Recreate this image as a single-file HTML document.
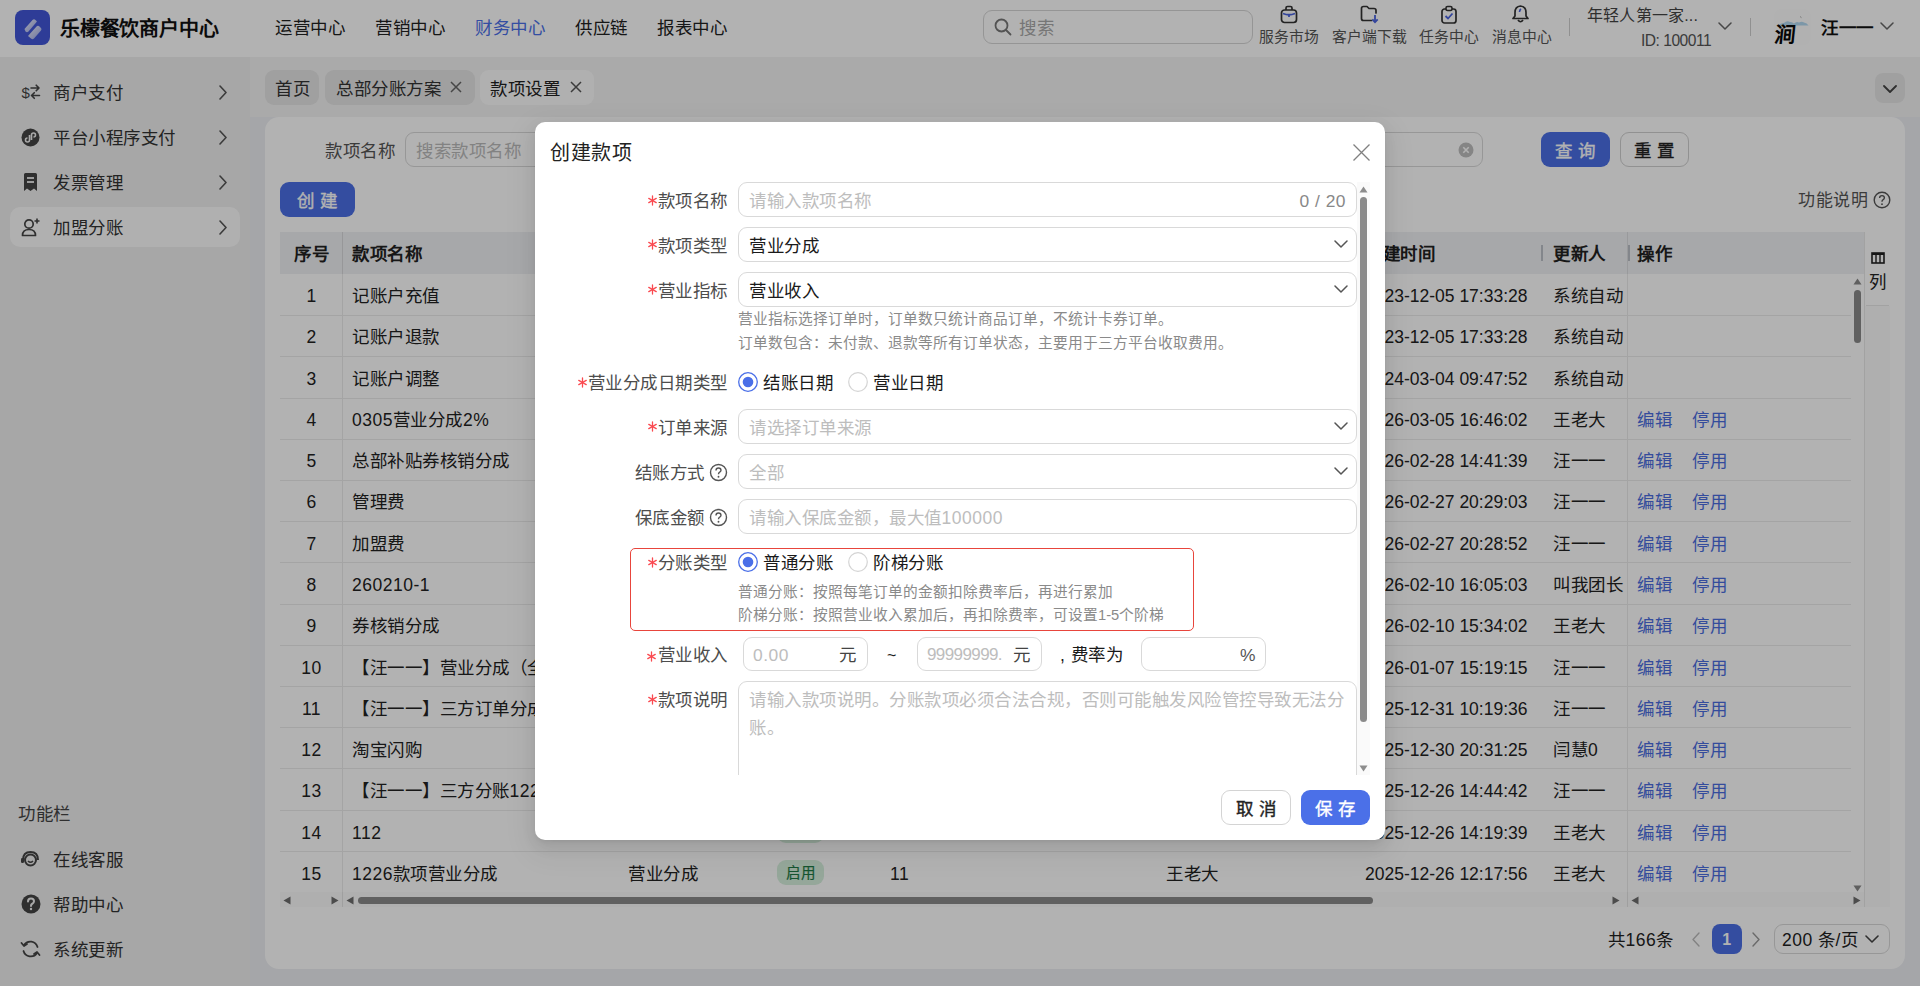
<!DOCTYPE html>
<html lang="zh-CN"><head><meta charset="utf-8">
<style>
*{box-sizing:border-box;margin:0;padding:0}
html,body{width:1920px;height:986px;overflow:hidden;background:#eceef2;font-family:"Liberation Sans",sans-serif;color:#222}
.a{position:absolute}
.t{position:absolute;white-space:nowrap;letter-spacing:0.5px}
</style></head><body>

<div class="a" style="left:0px;top:0px;width:1920px;height:57px;background:#fff"></div>
<div class="a" style="left:15px;top:10px;width:35px;height:35px;border-radius:8px;background:#4257d8"></div>
<svg class="a" style="left:15px;top:10px;" width="35" height="35" viewBox="0 0 35 35"><defs><linearGradient id="lg1" x1="0" y1="0" x2="1" y2="1"><stop offset="0" stop-color="#fff" stop-opacity="0.95"/><stop offset="1" stop-color="#fff" stop-opacity="0.45"/></linearGradient></defs><path d="M9.5 19 L17.5 10 Q19 8.5 20.5 10 L22 11.5 L13.5 21.5 Q12 23 10.5 21.5 Z" fill="url(#lg1)"/><path d="M13 26 L21.5 16.5 Q23 15 24.5 16.5 L26 18 Q27 19.2 26 20.5 L19 28.5 Q17.5 30 16 28.5 Z" fill="url(#lg1)"/></svg>
<div class="t" style="left:60px;top:16.5px;font-size:20px;line-height:24px;height:24px;color:#111;font-weight:bold;letter-spacing:-0.2px">乐檬餐饮商户中心</div>
<div class="t" style="left:275px;top:15.5px;font-size:17.5px;line-height:24px;height:24px;color:#222;font-weight:normal;">运营中心</div>
<div class="t" style="left:375px;top:15.5px;font-size:17.5px;line-height:24px;height:24px;color:#222;font-weight:normal;">营销中心</div>
<div class="t" style="left:475px;top:15.5px;font-size:17.5px;line-height:24px;height:24px;color:#4b70e8;font-weight:normal;">财务中心</div>
<div class="t" style="left:575px;top:15.5px;font-size:17.5px;line-height:24px;height:24px;color:#222;font-weight:normal;">供应链</div>
<div class="t" style="left:657px;top:15.5px;font-size:17.5px;line-height:24px;height:24px;color:#222;font-weight:normal;">报表中心</div>
<div class="a" style="left:983px;top:10px;width:270px;height:34px;border:1px solid #d6d6d6;border-radius:9px;background:#fff"></div>
<svg class="a" style="left:994px;top:18px;" width="18" height="18" viewBox="0 0 18 18"><circle cx="7.5" cy="7.5" r="6" fill="none" stroke="#777" stroke-width="1.8"/><line x1="12" y1="12" x2="16.5" y2="16.5" stroke="#777" stroke-width="1.8" stroke-linecap="round"/></svg>
<div class="t" style="left:1019px;top:15.5px;font-size:17.5px;line-height:24px;height:24px;color:#aaa;font-weight:normal;">搜索</div>
<svg class="a" style="left:1280px;top:5px;" width="18" height="19" viewBox="0 0 18 19"><rect x="1.5" y="5" width="15" height="12.5" rx="3" fill="none" stroke="#333" stroke-width="1.7"/><path d="M6 5 V3 Q6 1.5 7.5 1.5 H10.5 Q12 1.5 12 3 V5" fill="none" stroke="#333" stroke-width="1.7"/><path d="M3 8.5 Q9 11 15 8.5" fill="none" stroke="#4a63e0" stroke-width="1.8"/><line x1="9" y1="10" x2="9" y2="12" stroke="#4a63e0" stroke-width="1.8"/></svg>
<svg class="a" style="left:1360px;top:5px;" width="20" height="19" viewBox="0 0 20 19"><path d="M11.5 15.5 H3.5 Q1.5 15.5 1.5 13.5 V3.5 Q1.5 1.5 3.5 1.5 H7 L9 3.5 H14 Q16 3.5 16 5.5 V8" fill="none" stroke="#333" stroke-width="1.7" stroke-linejoin="round" stroke-linecap="round"/><line x1="15" y1="10" x2="15" y2="17" stroke="#4a63e0" stroke-width="1.8"/><polyline points="12.3,14.3 15,17.2 17.7,14.3" fill="none" stroke="#4a63e0" stroke-width="1.8"/></svg>
<svg class="a" style="left:1440px;top:5px;" width="18" height="19" viewBox="0 0 18 19"><rect x="2" y="4" width="14" height="14" rx="2.5" fill="none" stroke="#333" stroke-width="1.7"/><rect x="6" y="1.5" width="6" height="4" rx="1.5" fill="#fff" stroke="#333" stroke-width="1.6"/><polyline points="5.5,11 8,13.5 12.5,8.5" fill="none" stroke="#4a63e0" stroke-width="1.8"/></svg>
<svg class="a" style="left:1511px;top:4px;" width="19" height="20" viewBox="0 0 19 20"><path d="M9.5 2 Q4 2.5 4 8.5 V12 L2 14.5 H17 L15 12 V8.5 Q15 2.5 9.5 2 Z" fill="none" stroke="#333" stroke-width="1.7" stroke-linejoin="round"/><path d="M7 16 Q9.5 19.5 12 16" fill="none" stroke="#333" stroke-width="1.7"/><path d="M10 5 Q8.5 6 8.5 8" fill="none" stroke="#4a63e0" stroke-width="1.6"/></svg>
<div class="t" style="left:1259px;top:27.0px;font-size:14.8px;line-height:20px;height:20px;color:#555;font-weight:normal;letter-spacing:0">服务市场</div>
<div class="t" style="left:1332px;top:27.0px;font-size:14.8px;line-height:20px;height:20px;color:#555;font-weight:normal;letter-spacing:0">客户端下载</div>
<div class="t" style="left:1419px;top:27.0px;font-size:14.8px;line-height:20px;height:20px;color:#555;font-weight:normal;letter-spacing:0">任务中心</div>
<div class="t" style="left:1492px;top:27.0px;font-size:14.8px;line-height:20px;height:20px;color:#555;font-weight:normal;letter-spacing:0">消息中心</div>
<div class="a" style="left:1569px;top:18px;width:1px;height:18px;background:#cfcfcf"></div>
<div class="t" style="left:1587px;top:6.0px;font-size:16px;line-height:20px;height:20px;color:#444;font-weight:normal;letter-spacing:0.2px">年轻人第一家...</div>
<div class="t" style="left:1641px;top:30.5px;font-size:15.6px;line-height:20px;height:20px;color:#555;font-weight:normal;letter-spacing:-0.5px">ID: 100011</div>
<svg class="a" style="left:1718px;top:22px;" width="14" height="9" viewBox="0 0 14 9"><polyline points="1,1 7.0,7 13,1" fill="none" stroke="#666" stroke-width="1.5" stroke-linecap="round" stroke-linejoin="round"/></svg>
<div class="a" style="left:1750px;top:18px;width:1px;height:18px;background:#cfcfcf"></div>
<div class="a" style="left:1774px;top:9px;width:37px;height:36px;border-radius:8px;background:#fefefe"></div>
<svg class="a" style="left:1774px;top:9px;" width="37" height="36" viewBox="0 0 37 36"><path d="M4.5 16.5 Q7 13.5 10 14 Q13 11 16 13 Q18 12.5 20 14.5 Q22.5 12 25 13.5 Q28 12 30 13.5 Q33 14 34.5 16.5 Z" fill="#aed6f0" opacity="0.95"/><path d="M26 7.5 L27.5 8.7" stroke="#777" stroke-width="0.6"/><text x="13.5" y="33.5" font-size="21" font-weight="bold" text-anchor="middle" fill="#0a0a0a" font-family="Liberation Serif" transform="skewX(-6)">涧</text></svg>
<div class="t" style="left:1821px;top:15.0px;font-size:17.5px;line-height:26px;height:26px;color:#111;font-weight:bold;">汪一一</div>
<svg class="a" style="left:1880px;top:22px;" width="14" height="9" viewBox="0 0 14 9"><polyline points="1,1 7.0,7 13,1" fill="none" stroke="#666" stroke-width="1.5" stroke-linecap="round" stroke-linejoin="round"/></svg>
<div class="a" style="left:0px;top:57px;width:250px;height:929px;background:#efefef"></div>
<div class="a" style="left:10px;top:207px;width:230px;height:40px;border-radius:10px;background:#fcfcfc"></div>
<div class="t" style="left:53px;top:81.0px;font-size:17.5px;line-height:24px;height:24px;color:#333;font-weight:normal;">商户支付</div>
<svg class="a" style="left:219px;top:85px;" width="9" height="15" viewBox="0 0 9 15"><polyline points="1,1 7,7.5 1,14" fill="none" stroke="#555" stroke-width="1.6" stroke-linecap="round" stroke-linejoin="round"/></svg>
<div class="t" style="left:53px;top:126.0px;font-size:17.5px;line-height:24px;height:24px;color:#333;font-weight:normal;">平台小程序支付</div>
<svg class="a" style="left:219px;top:130px;" width="9" height="15" viewBox="0 0 9 15"><polyline points="1,1 7,7.5 1,14" fill="none" stroke="#555" stroke-width="1.6" stroke-linecap="round" stroke-linejoin="round"/></svg>
<div class="t" style="left:53px;top:171.0px;font-size:17.5px;line-height:24px;height:24px;color:#333;font-weight:normal;">发票管理</div>
<svg class="a" style="left:219px;top:175px;" width="9" height="15" viewBox="0 0 9 15"><polyline points="1,1 7,7.5 1,14" fill="none" stroke="#555" stroke-width="1.6" stroke-linecap="round" stroke-linejoin="round"/></svg>
<div class="t" style="left:53px;top:216.0px;font-size:17.5px;line-height:24px;height:24px;color:#333;font-weight:normal;">加盟分账</div>
<svg class="a" style="left:219px;top:220px;" width="9" height="15" viewBox="0 0 9 15"><polyline points="1,1 7,7.5 1,14" fill="none" stroke="#555" stroke-width="1.6" stroke-linecap="round" stroke-linejoin="round"/></svg>
<svg class="a" style="left:21px;top:82px;" width="20" height="20" viewBox="0 0 20 20"><text x="0.5" y="15.5" font-size="15" fill="#444" font-family="Liberation Sans">$</text><path d="M10 6 H18 M15.2 3.2 L18 6 L15.2 8.8 M18.5 13.5 H10.5 M13.3 10.7 L10.5 13.5 L13.3 16.3" fill="none" stroke="#444" stroke-width="1.6" stroke-linecap="round" stroke-linejoin="round"/></svg>
<svg class="a" style="left:21px;top:128px;" width="19" height="19" viewBox="0 0 19 19"><circle cx="9.5" cy="9.5" r="9" fill="#444"/><path d="M8.5 7 V12 Q8.5 14 6.5 14 Q4.5 14 4.5 12 Q4.5 10 6.5 10 M10.5 12 V7 Q10.5 5 12.5 5 Q14.5 5 14.5 7 Q14.5 9 12.5 9" fill="none" stroke="#f2f2f2" stroke-width="1.6"/></svg>
<svg class="a" style="left:22px;top:172px;" width="17" height="20" viewBox="0 0 17 20"><path d="M2 2.5 Q2 1 3.5 1 H13.5 Q15 1 15 2.5 V19 L12 16.5 L8.5 19 L5 16.5 L2 19 Z" fill="#444"/><line x1="5" y1="6" x2="12" y2="6" stroke="#f2f2f2" stroke-width="1.8"/><line x1="5" y1="10" x2="12" y2="10" stroke="#f2f2f2" stroke-width="1.8"/></svg>
<svg class="a" style="left:21px;top:217px;" width="20" height="20" viewBox="0 0 20 20"><circle cx="8" cy="7" r="4.2" fill="none" stroke="#444" stroke-width="1.7"/><path d="M1.5 18.5 Q1.5 12.5 8 12.5 Q14.5 12.5 14.5 18.5 Z" fill="none" stroke="#444" stroke-width="1.7" stroke-linejoin="round"/><path d="M16 1.5 V6.5 M13.5 4 H18.5" stroke="#444" stroke-width="1.6"/></svg>
<div class="t" style="left:18px;top:802.0px;font-size:17.5px;line-height:24px;height:24px;color:#444;font-weight:normal;">功能栏</div>
<div class="t" style="left:53px;top:848.0px;font-size:17.5px;line-height:24px;height:24px;color:#333;font-weight:normal;">在线客服</div>
<div class="t" style="left:53px;top:893.0px;font-size:17.5px;line-height:24px;height:24px;color:#333;font-weight:normal;">帮助中心</div>
<div class="t" style="left:53px;top:938.0px;font-size:17.5px;line-height:24px;height:24px;color:#333;font-weight:normal;">系统更新</div>
<svg class="a" style="left:20px;top:849px;" width="21" height="20" viewBox="0 0 21 20"><path d="M3 11 Q3 3 10.5 3 Q18 3 18 11" fill="none" stroke="#444" stroke-width="2"/><circle cx="10.5" cy="11" r="5.5" fill="none" stroke="#444" stroke-width="2"/><rect x="1" y="9" width="3" height="5" rx="1.2" fill="#444"/><path d="M8 12 Q10.5 14.5 13 12" fill="none" stroke="#444" stroke-width="1.6"/></svg>
<svg class="a" style="left:21px;top:894px;" width="20" height="20" viewBox="0 0 20 20"><circle cx="10" cy="10" r="9.5" fill="#444"/><path d="M7 7.5 Q7 4.5 10 4.5 Q13 4.5 13 7.3 Q13 9 11 10 Q10 10.5 10 12" fill="none" stroke="#f2f2f2" stroke-width="2" stroke-linecap="round"/><circle cx="10" cy="15" r="1.2" fill="#f2f2f2"/></svg>
<svg class="a" style="left:20px;top:939px;" width="21" height="20" viewBox="0 0 21 20"><path d="M17.5 8 A7.5 7.5 0 0 0 4 6 M3.5 12 A7.5 7.5 0 0 0 17 14" fill="none" stroke="#444" stroke-width="1.8" stroke-linecap="round"/><path d="M1.5 4 L4 7 L7 5" fill="none" stroke="#444" stroke-width="1.8" stroke-linecap="round" stroke-linejoin="round"/><path d="M19.5 16 L17 13 L14 15" fill="none" stroke="#444" stroke-width="1.8" stroke-linecap="round" stroke-linejoin="round"/></svg>
<div class="a" style="left:250px;top:57px;width:1670px;height:60px;background:#f4f4f4"></div>
<div class="a" style="left:265px;top:70px;width:54px;height:35px;border-radius:9px;background:#e5e5e5"></div>
<div class="t" style="left:275px;top:76.5px;font-size:17.5px;line-height:24px;height:24px;color:#333;font-weight:normal;">首页</div>
<div class="a" style="left:325px;top:70px;width:150px;height:35px;border-radius:9px;background:#e5e5e5"></div>
<div class="t" style="left:336px;top:76.5px;font-size:17.5px;line-height:24px;height:24px;color:#333;font-weight:normal;">总部分账方案</div>
<svg class="a" style="left:450px;top:81px;" width="12" height="12" viewBox="0 0 12 12"><path d="M1 1 L11 11 M11 1 L1 11" stroke="#666" stroke-width="1.5"/></svg>
<div class="a" style="left:480px;top:70px;width:114px;height:35px;border-radius:9px;background:#fdfdfd"></div>
<div class="t" style="left:490px;top:76.5px;font-size:17.5px;line-height:24px;height:24px;color:#222;font-weight:normal;">款项设置</div>
<svg class="a" style="left:570px;top:81px;" width="12" height="12" viewBox="0 0 12 12"><path d="M1 1 L11 11 M11 1 L1 11" stroke="#555" stroke-width="1.5"/></svg>
<div class="a" style="left:1875px;top:73px;width:30px;height:30px;border-radius:8px;background:#e6e6e6"></div>
<svg class="a" style="left:1883px;top:85px;" width="14" height="9" viewBox="0 0 14 9"><polyline points="1,1 7.0,7 13,1" fill="none" stroke="#444" stroke-width="1.8" stroke-linecap="round" stroke-linejoin="round"/></svg>
<div class="a" style="left:265px;top:117px;width:1640px;height:852px;border-radius:14px;background:#fff"></div>
<div class="t" style="right:1525px;top:139.0px;font-size:17.5px;line-height:24px;height:24px;color:#555;font-weight:normal;text-align:right;">款项名称</div>
<div class="a" style="left:405px;top:132px;width:1078px;height:35px;border:1px solid #d9d9d9;border-radius:9px;background:#fff"></div>
<div class="t" style="left:416px;top:139.0px;font-size:17.5px;line-height:24px;height:24px;color:#bbb;font-weight:normal;">搜索款项名称</div>
<svg class="a" style="left:1458px;top:142px;" width="16" height="16" viewBox="0 0 16 16"><circle cx="8" cy="8" r="7.5" fill="#bfbfbf"/><path d="M5.3 5.3 L10.7 10.7 M10.7 5.3 L5.3 10.7" stroke="#fff" stroke-width="1.6"/></svg>
<div class="a" style="left:1541px;top:132px;width:69px;height:35px;border-radius:9px;background:#4b6fe6"></div>
<div class="t" style="left:1541.0px;width:69px;top:139.0px;font-size:17.5px;line-height:24px;height:24px;color:#fff;font-weight:400;text-align:center;-webkit-text-stroke:0.35px #fff">查 询</div>
<div class="a" style="left:1620px;top:132px;width:69px;height:35px;border:1px solid #d0d0d0;border-radius:9px;background:#fff"></div>
<div class="t" style="left:1620.0px;width:69px;top:139.0px;font-size:17.5px;line-height:24px;height:24px;color:#222;font-weight:400;text-align:center;-webkit-text-stroke:0.35px #222">重 置</div>
<div class="a" style="left:280px;top:182px;width:75px;height:35px;border-radius:9px;background:#4b6fe6"></div>
<div class="t" style="left:280.0px;width:75px;top:189.0px;font-size:17.5px;line-height:24px;height:24px;color:#fff;font-weight:400;text-align:center;-webkit-text-stroke:0.35px #fff">创 建</div>
<div class="t" style="right:52px;top:189.0px;font-size:17px;line-height:24px;height:24px;color:#555;font-weight:normal;text-align:right;">功能说明</div>
<svg class="a" style="left:1873px;top:191px;" width="18" height="18" viewBox="0 0 18 18"><circle cx="9" cy="9" r="7.8" fill="none" stroke="#555" stroke-width="1.4"/><path d="M6.6 7 Q6.6 4.6 9 4.6 Q11.4 4.6 11.4 6.8 Q11.4 8.2 9.9 8.9 Q9 9.4 9 10.8" fill="none" stroke="#555" stroke-width="1.4"/><circle cx="9" cy="13.2" r="0.9" fill="#555"/></svg>
<div class="a" style="left:280px;top:232px;width:1584px;height:42px;background:#f0f1f4"></div>
<div class="t" style="left:294px;top:241.5px;font-size:17.5px;line-height:24px;height:24px;color:#222;font-weight:bold;">序号</div>
<div class="t" style="left:352px;top:241.5px;font-size:17.5px;line-height:24px;height:24px;color:#222;font-weight:bold;">款项名称</div>
<div class="t" style="left:628px;top:241.5px;font-size:17.5px;line-height:24px;height:24px;color:#222;font-weight:bold;">款项类型</div>
<div class="t" style="left:777px;top:241.5px;font-size:17.5px;line-height:24px;height:24px;color:#222;font-weight:bold;">状态</div>
<div class="t" style="left:890px;top:241.5px;font-size:17.5px;line-height:24px;height:24px;color:#222;font-weight:bold;">排序</div>
<div class="t" style="left:1166px;top:241.5px;font-size:17.5px;line-height:24px;height:24px;color:#222;font-weight:bold;">创建人</div>
<div class="t" style="left:1365px;top:241.5px;font-size:17.5px;line-height:24px;height:24px;color:#222;font-weight:bold;">创建时间</div>
<div class="t" style="left:1553px;top:241.5px;font-size:17.5px;line-height:24px;height:24px;color:#222;font-weight:bold;">更新人</div>
<div class="t" style="left:1637px;top:241.5px;font-size:17.5px;line-height:24px;height:24px;color:#222;font-weight:bold;">操作</div>
<div class="a" style="left:342px;top:232px;width:1px;height:42px;background:#d8d9dc"></div>
<div class="a" style="left:1541px;top:245px;width:2px;height:16px;background:#bcc0c8"></div>
<div class="a" style="left:1628px;top:245px;width:2px;height:16px;background:#bcc0c8"></div>
<div class="a" style="left:1627px;top:232px;width:1px;height:42px;background:#dcdde0"></div>
<div class="a" style="left:617px;top:245px;width:2px;height:16px;background:#bcc0c8"></div>
<div class="a" style="left:767px;top:245px;width:2px;height:16px;background:#bcc0c8"></div>
<div class="a" style="left:880px;top:245px;width:2px;height:16px;background:#bcc0c8"></div>
<div class="a" style="left:1155px;top:245px;width:2px;height:16px;background:#bcc0c8"></div>
<div class="a" style="left:1355px;top:245px;width:2px;height:16px;background:#bcc0c8"></div>
<div class="a" style="left:280px;top:315px;width:1571px;height:1px;background:#ebebeb"></div>
<div class="a" style="left:342px;top:274px;width:1px;height:41px;background:#ebebeb"></div>
<div class="a" style="left:1627px;top:274px;width:1px;height:41px;background:#ebebeb"></div>
<div class="t" style="left:286.5px;width:50px;top:284.0px;font-size:17.5px;line-height:24px;height:24px;color:#222;font-weight:normal;text-align:center;">1</div>
<div class="t" style="left:352px;top:284.0px;font-size:17.5px;line-height:24px;height:24px;color:#222;font-weight:normal;">记账户充值</div>
<div class="t" style="left:1365px;top:284.0px;font-size:17.5px;line-height:24px;height:24px;color:#222;font-weight:normal;letter-spacing:0">2023-12-05 17:33:28</div>
<div class="t" style="left:1553px;top:284.0px;font-size:17.5px;line-height:24px;height:24px;color:#222;font-weight:normal;">系统自动</div>
<div class="a" style="left:280px;top:356px;width:1571px;height:1px;background:#ebebeb"></div>
<div class="a" style="left:342px;top:315px;width:1px;height:41px;background:#ebebeb"></div>
<div class="a" style="left:1627px;top:315px;width:1px;height:41px;background:#ebebeb"></div>
<div class="t" style="left:286.5px;width:50px;top:325.3px;font-size:17.5px;line-height:24px;height:24px;color:#222;font-weight:normal;text-align:center;">2</div>
<div class="t" style="left:352px;top:325.3px;font-size:17.5px;line-height:24px;height:24px;color:#222;font-weight:normal;">记账户退款</div>
<div class="t" style="left:1365px;top:325.3px;font-size:17.5px;line-height:24px;height:24px;color:#222;font-weight:normal;letter-spacing:0">2023-12-05 17:33:28</div>
<div class="t" style="left:1553px;top:325.3px;font-size:17.5px;line-height:24px;height:24px;color:#222;font-weight:normal;">系统自动</div>
<div class="a" style="left:280px;top:398px;width:1571px;height:1px;background:#ebebeb"></div>
<div class="a" style="left:342px;top:357px;width:1px;height:41px;background:#ebebeb"></div>
<div class="a" style="left:1627px;top:357px;width:1px;height:41px;background:#ebebeb"></div>
<div class="t" style="left:286.5px;width:50px;top:366.6px;font-size:17.5px;line-height:24px;height:24px;color:#222;font-weight:normal;text-align:center;">3</div>
<div class="t" style="left:352px;top:366.6px;font-size:17.5px;line-height:24px;height:24px;color:#222;font-weight:normal;">记账户调整</div>
<div class="t" style="left:1365px;top:366.6px;font-size:17.5px;line-height:24px;height:24px;color:#222;font-weight:normal;letter-spacing:0">2024-03-04 09:47:52</div>
<div class="t" style="left:1553px;top:366.6px;font-size:17.5px;line-height:24px;height:24px;color:#222;font-weight:normal;">系统自动</div>
<div class="a" style="left:280px;top:439px;width:1571px;height:1px;background:#ebebeb"></div>
<div class="a" style="left:342px;top:398px;width:1px;height:41px;background:#ebebeb"></div>
<div class="a" style="left:1627px;top:398px;width:1px;height:41px;background:#ebebeb"></div>
<div class="t" style="left:286.5px;width:50px;top:407.9px;font-size:17.5px;line-height:24px;height:24px;color:#222;font-weight:normal;text-align:center;">4</div>
<div class="t" style="left:352px;top:407.9px;font-size:17.5px;line-height:24px;height:24px;color:#222;font-weight:normal;">0305营业分成2%</div>
<div class="t" style="left:628px;top:407.9px;font-size:17.5px;line-height:24px;height:24px;color:#222;font-weight:normal;">营业分成</div>
<div class="a" style="left:777px;top:405px;width:47px;height:25px;border-radius:9px;background:#d6efdd"></div>
<div class="t" style="left:777.0px;width:47px;top:406.9px;font-size:14.5px;line-height:24px;height:24px;color:#1f7a45;font-weight:normal;text-align:center;-webkit-text-stroke:0.2px #1f7a45">启用</div>
<div class="t" style="left:1166px;top:407.9px;font-size:17.5px;line-height:24px;height:24px;color:#222;font-weight:normal;">王老大</div>
<div class="t" style="left:1365px;top:407.9px;font-size:17.5px;line-height:24px;height:24px;color:#222;font-weight:normal;letter-spacing:0">2026-03-05 16:46:02</div>
<div class="t" style="left:1553px;top:407.9px;font-size:17.5px;line-height:24px;height:24px;color:#222;font-weight:normal;">王老大</div>
<div class="t" style="left:1637px;top:407.9px;font-size:17.5px;line-height:24px;height:24px;color:#4b6ee0;font-weight:normal;">编辑</div>
<div class="t" style="left:1692px;top:407.9px;font-size:17.5px;line-height:24px;height:24px;color:#4b6ee0;font-weight:normal;">停用</div>
<div class="a" style="left:280px;top:480px;width:1571px;height:1px;background:#ebebeb"></div>
<div class="a" style="left:342px;top:439px;width:1px;height:41px;background:#ebebeb"></div>
<div class="a" style="left:1627px;top:439px;width:1px;height:41px;background:#ebebeb"></div>
<div class="t" style="left:286.5px;width:50px;top:449.1px;font-size:17.5px;line-height:24px;height:24px;color:#222;font-weight:normal;text-align:center;">5</div>
<div class="t" style="left:352px;top:449.1px;font-size:17.5px;line-height:24px;height:24px;color:#222;font-weight:normal;">总部补贴券核销分成</div>
<div class="t" style="left:628px;top:449.1px;font-size:17.5px;line-height:24px;height:24px;color:#222;font-weight:normal;">营业分成</div>
<div class="a" style="left:777px;top:447px;width:47px;height:25px;border-radius:9px;background:#d6efdd"></div>
<div class="t" style="left:777.0px;width:47px;top:448.1px;font-size:14.5px;line-height:24px;height:24px;color:#1f7a45;font-weight:normal;text-align:center;-webkit-text-stroke:0.2px #1f7a45">启用</div>
<div class="t" style="left:1166px;top:449.1px;font-size:17.5px;line-height:24px;height:24px;color:#222;font-weight:normal;">汪一一</div>
<div class="t" style="left:1365px;top:449.1px;font-size:17.5px;line-height:24px;height:24px;color:#222;font-weight:normal;letter-spacing:0">2026-02-28 14:41:39</div>
<div class="t" style="left:1553px;top:449.1px;font-size:17.5px;line-height:24px;height:24px;color:#222;font-weight:normal;">汪一一</div>
<div class="t" style="left:1637px;top:449.1px;font-size:17.5px;line-height:24px;height:24px;color:#4b6ee0;font-weight:normal;">编辑</div>
<div class="t" style="left:1692px;top:449.1px;font-size:17.5px;line-height:24px;height:24px;color:#4b6ee0;font-weight:normal;">停用</div>
<div class="a" style="left:280px;top:521px;width:1571px;height:1px;background:#ebebeb"></div>
<div class="a" style="left:342px;top:480px;width:1px;height:41px;background:#ebebeb"></div>
<div class="a" style="left:1627px;top:480px;width:1px;height:41px;background:#ebebeb"></div>
<div class="t" style="left:286.5px;width:50px;top:490.4px;font-size:17.5px;line-height:24px;height:24px;color:#222;font-weight:normal;text-align:center;">6</div>
<div class="t" style="left:352px;top:490.4px;font-size:17.5px;line-height:24px;height:24px;color:#222;font-weight:normal;">管理费</div>
<div class="t" style="left:628px;top:490.4px;font-size:17.5px;line-height:24px;height:24px;color:#222;font-weight:normal;">固定费用</div>
<div class="a" style="left:777px;top:488px;width:47px;height:25px;border-radius:9px;background:#d6efdd"></div>
<div class="t" style="left:777.0px;width:47px;top:489.4px;font-size:14.5px;line-height:24px;height:24px;color:#1f7a45;font-weight:normal;text-align:center;-webkit-text-stroke:0.2px #1f7a45">启用</div>
<div class="t" style="left:1166px;top:490.4px;font-size:17.5px;line-height:24px;height:24px;color:#222;font-weight:normal;">汪一一</div>
<div class="t" style="left:1365px;top:490.4px;font-size:17.5px;line-height:24px;height:24px;color:#222;font-weight:normal;letter-spacing:0">2026-02-27 20:29:03</div>
<div class="t" style="left:1553px;top:490.4px;font-size:17.5px;line-height:24px;height:24px;color:#222;font-weight:normal;">汪一一</div>
<div class="t" style="left:1637px;top:490.4px;font-size:17.5px;line-height:24px;height:24px;color:#4b6ee0;font-weight:normal;">编辑</div>
<div class="t" style="left:1692px;top:490.4px;font-size:17.5px;line-height:24px;height:24px;color:#4b6ee0;font-weight:normal;">停用</div>
<div class="a" style="left:280px;top:562px;width:1571px;height:1px;background:#ebebeb"></div>
<div class="a" style="left:342px;top:522px;width:1px;height:41px;background:#ebebeb"></div>
<div class="a" style="left:1627px;top:522px;width:1px;height:41px;background:#ebebeb"></div>
<div class="t" style="left:286.5px;width:50px;top:531.7px;font-size:17.5px;line-height:24px;height:24px;color:#222;font-weight:normal;text-align:center;">7</div>
<div class="t" style="left:352px;top:531.7px;font-size:17.5px;line-height:24px;height:24px;color:#222;font-weight:normal;">加盟费</div>
<div class="t" style="left:628px;top:531.7px;font-size:17.5px;line-height:24px;height:24px;color:#222;font-weight:normal;">固定费用</div>
<div class="a" style="left:777px;top:529px;width:47px;height:25px;border-radius:9px;background:#d6efdd"></div>
<div class="t" style="left:777.0px;width:47px;top:530.7px;font-size:14.5px;line-height:24px;height:24px;color:#1f7a45;font-weight:normal;text-align:center;-webkit-text-stroke:0.2px #1f7a45">启用</div>
<div class="t" style="left:1166px;top:531.7px;font-size:17.5px;line-height:24px;height:24px;color:#222;font-weight:normal;">汪一一</div>
<div class="t" style="left:1365px;top:531.7px;font-size:17.5px;line-height:24px;height:24px;color:#222;font-weight:normal;letter-spacing:0">2026-02-27 20:28:52</div>
<div class="t" style="left:1553px;top:531.7px;font-size:17.5px;line-height:24px;height:24px;color:#222;font-weight:normal;">汪一一</div>
<div class="t" style="left:1637px;top:531.7px;font-size:17.5px;line-height:24px;height:24px;color:#4b6ee0;font-weight:normal;">编辑</div>
<div class="t" style="left:1692px;top:531.7px;font-size:17.5px;line-height:24px;height:24px;color:#4b6ee0;font-weight:normal;">停用</div>
<div class="a" style="left:280px;top:604px;width:1571px;height:1px;background:#ebebeb"></div>
<div class="a" style="left:342px;top:563px;width:1px;height:41px;background:#ebebeb"></div>
<div class="a" style="left:1627px;top:563px;width:1px;height:41px;background:#ebebeb"></div>
<div class="t" style="left:286.5px;width:50px;top:573.0px;font-size:17.5px;line-height:24px;height:24px;color:#222;font-weight:normal;text-align:center;">8</div>
<div class="t" style="left:352px;top:573.0px;font-size:17.5px;line-height:24px;height:24px;color:#222;font-weight:normal;">260210-1</div>
<div class="t" style="left:628px;top:573.0px;font-size:17.5px;line-height:24px;height:24px;color:#222;font-weight:normal;">营业分成</div>
<div class="a" style="left:777px;top:570px;width:47px;height:25px;border-radius:9px;background:#d6efdd"></div>
<div class="t" style="left:777.0px;width:47px;top:572.0px;font-size:14.5px;line-height:24px;height:24px;color:#1f7a45;font-weight:normal;text-align:center;-webkit-text-stroke:0.2px #1f7a45">启用</div>
<div class="t" style="left:1166px;top:573.0px;font-size:17.5px;line-height:24px;height:24px;color:#222;font-weight:normal;">叫我团长</div>
<div class="t" style="left:1365px;top:573.0px;font-size:17.5px;line-height:24px;height:24px;color:#222;font-weight:normal;letter-spacing:0">2026-02-10 16:05:03</div>
<div class="t" style="left:1553px;top:573.0px;font-size:17.5px;line-height:24px;height:24px;color:#222;font-weight:normal;">叫我团长</div>
<div class="t" style="left:1637px;top:573.0px;font-size:17.5px;line-height:24px;height:24px;color:#4b6ee0;font-weight:normal;">编辑</div>
<div class="t" style="left:1692px;top:573.0px;font-size:17.5px;line-height:24px;height:24px;color:#4b6ee0;font-weight:normal;">停用</div>
<div class="a" style="left:280px;top:645px;width:1571px;height:1px;background:#ebebeb"></div>
<div class="a" style="left:342px;top:604px;width:1px;height:41px;background:#ebebeb"></div>
<div class="a" style="left:1627px;top:604px;width:1px;height:41px;background:#ebebeb"></div>
<div class="t" style="left:286.5px;width:50px;top:614.3px;font-size:17.5px;line-height:24px;height:24px;color:#222;font-weight:normal;text-align:center;">9</div>
<div class="t" style="left:352px;top:614.3px;font-size:17.5px;line-height:24px;height:24px;color:#222;font-weight:normal;">券核销分成</div>
<div class="t" style="left:628px;top:614.3px;font-size:17.5px;line-height:24px;height:24px;color:#222;font-weight:normal;">营业分成</div>
<div class="a" style="left:777px;top:612px;width:47px;height:25px;border-radius:9px;background:#d6efdd"></div>
<div class="t" style="left:777.0px;width:47px;top:613.3px;font-size:14.5px;line-height:24px;height:24px;color:#1f7a45;font-weight:normal;text-align:center;-webkit-text-stroke:0.2px #1f7a45">启用</div>
<div class="t" style="left:1166px;top:614.3px;font-size:17.5px;line-height:24px;height:24px;color:#222;font-weight:normal;">王老大</div>
<div class="t" style="left:1365px;top:614.3px;font-size:17.5px;line-height:24px;height:24px;color:#222;font-weight:normal;letter-spacing:0">2026-02-10 15:34:02</div>
<div class="t" style="left:1553px;top:614.3px;font-size:17.5px;line-height:24px;height:24px;color:#222;font-weight:normal;">王老大</div>
<div class="t" style="left:1637px;top:614.3px;font-size:17.5px;line-height:24px;height:24px;color:#4b6ee0;font-weight:normal;">编辑</div>
<div class="t" style="left:1692px;top:614.3px;font-size:17.5px;line-height:24px;height:24px;color:#4b6ee0;font-weight:normal;">停用</div>
<div class="a" style="left:280px;top:686px;width:1571px;height:1px;background:#ebebeb"></div>
<div class="a" style="left:342px;top:646px;width:1px;height:41px;background:#ebebeb"></div>
<div class="a" style="left:1627px;top:646px;width:1px;height:41px;background:#ebebeb"></div>
<div class="t" style="left:286.5px;width:50px;top:655.6px;font-size:17.5px;line-height:24px;height:24px;color:#222;font-weight:normal;text-align:center;">10</div>
<div class="t" style="left:352px;top:655.6px;font-size:17.5px;line-height:24px;height:24px;color:#222;font-weight:normal;">【汪一一】营业分成（全部）</div>
<div class="t" style="left:628px;top:655.6px;font-size:17.5px;line-height:24px;height:24px;color:#222;font-weight:normal;">营业分成</div>
<div class="a" style="left:777px;top:653px;width:47px;height:25px;border-radius:9px;background:#d6efdd"></div>
<div class="t" style="left:777.0px;width:47px;top:654.6px;font-size:14.5px;line-height:24px;height:24px;color:#1f7a45;font-weight:normal;text-align:center;-webkit-text-stroke:0.2px #1f7a45">启用</div>
<div class="t" style="left:1166px;top:655.6px;font-size:17.5px;line-height:24px;height:24px;color:#222;font-weight:normal;">汪一一</div>
<div class="t" style="left:1365px;top:655.6px;font-size:17.5px;line-height:24px;height:24px;color:#222;font-weight:normal;letter-spacing:0">2026-01-07 15:19:15</div>
<div class="t" style="left:1553px;top:655.6px;font-size:17.5px;line-height:24px;height:24px;color:#222;font-weight:normal;">汪一一</div>
<div class="t" style="left:1637px;top:655.6px;font-size:17.5px;line-height:24px;height:24px;color:#4b6ee0;font-weight:normal;">编辑</div>
<div class="t" style="left:1692px;top:655.6px;font-size:17.5px;line-height:24px;height:24px;color:#4b6ee0;font-weight:normal;">停用</div>
<div class="a" style="left:280px;top:727px;width:1571px;height:1px;background:#ebebeb"></div>
<div class="a" style="left:342px;top:687px;width:1px;height:41px;background:#ebebeb"></div>
<div class="a" style="left:1627px;top:687px;width:1px;height:41px;background:#ebebeb"></div>
<div class="t" style="left:286.5px;width:50px;top:696.9px;font-size:17.5px;line-height:24px;height:24px;color:#222;font-weight:normal;text-align:center;">11</div>
<div class="t" style="left:352px;top:696.9px;font-size:17.5px;line-height:24px;height:24px;color:#222;font-weight:normal;">【汪一一】三方订单分成</div>
<div class="t" style="left:628px;top:696.9px;font-size:17.5px;line-height:24px;height:24px;color:#222;font-weight:normal;">营业分成</div>
<div class="a" style="left:777px;top:694px;width:47px;height:25px;border-radius:9px;background:#d6efdd"></div>
<div class="t" style="left:777.0px;width:47px;top:695.9px;font-size:14.5px;line-height:24px;height:24px;color:#1f7a45;font-weight:normal;text-align:center;-webkit-text-stroke:0.2px #1f7a45">启用</div>
<div class="t" style="left:1166px;top:696.9px;font-size:17.5px;line-height:24px;height:24px;color:#222;font-weight:normal;">汪一一</div>
<div class="t" style="left:1365px;top:696.9px;font-size:17.5px;line-height:24px;height:24px;color:#222;font-weight:normal;letter-spacing:0">2025-12-31 10:19:36</div>
<div class="t" style="left:1553px;top:696.9px;font-size:17.5px;line-height:24px;height:24px;color:#222;font-weight:normal;">汪一一</div>
<div class="t" style="left:1637px;top:696.9px;font-size:17.5px;line-height:24px;height:24px;color:#4b6ee0;font-weight:normal;">编辑</div>
<div class="t" style="left:1692px;top:696.9px;font-size:17.5px;line-height:24px;height:24px;color:#4b6ee0;font-weight:normal;">停用</div>
<div class="a" style="left:280px;top:768px;width:1571px;height:1px;background:#ebebeb"></div>
<div class="a" style="left:342px;top:728px;width:1px;height:41px;background:#ebebeb"></div>
<div class="a" style="left:1627px;top:728px;width:1px;height:41px;background:#ebebeb"></div>
<div class="t" style="left:286.5px;width:50px;top:738.1px;font-size:17.5px;line-height:24px;height:24px;color:#222;font-weight:normal;text-align:center;">12</div>
<div class="t" style="left:352px;top:738.1px;font-size:17.5px;line-height:24px;height:24px;color:#222;font-weight:normal;">淘宝闪购</div>
<div class="t" style="left:628px;top:738.1px;font-size:17.5px;line-height:24px;height:24px;color:#222;font-weight:normal;">营业分成</div>
<div class="a" style="left:777px;top:736px;width:47px;height:25px;border-radius:9px;background:#d6efdd"></div>
<div class="t" style="left:777.0px;width:47px;top:737.1px;font-size:14.5px;line-height:24px;height:24px;color:#1f7a45;font-weight:normal;text-align:center;-webkit-text-stroke:0.2px #1f7a45">启用</div>
<div class="t" style="left:1166px;top:738.1px;font-size:17.5px;line-height:24px;height:24px;color:#222;font-weight:normal;">闫慧0</div>
<div class="t" style="left:1365px;top:738.1px;font-size:17.5px;line-height:24px;height:24px;color:#222;font-weight:normal;letter-spacing:0">2025-12-30 20:31:25</div>
<div class="t" style="left:1553px;top:738.1px;font-size:17.5px;line-height:24px;height:24px;color:#222;font-weight:normal;">闫慧0</div>
<div class="t" style="left:1637px;top:738.1px;font-size:17.5px;line-height:24px;height:24px;color:#4b6ee0;font-weight:normal;">编辑</div>
<div class="t" style="left:1692px;top:738.1px;font-size:17.5px;line-height:24px;height:24px;color:#4b6ee0;font-weight:normal;">停用</div>
<div class="a" style="left:280px;top:810px;width:1571px;height:1px;background:#ebebeb"></div>
<div class="a" style="left:342px;top:769px;width:1px;height:41px;background:#ebebeb"></div>
<div class="a" style="left:1627px;top:769px;width:1px;height:41px;background:#ebebeb"></div>
<div class="t" style="left:286.5px;width:50px;top:779.4px;font-size:17.5px;line-height:24px;height:24px;color:#222;font-weight:normal;text-align:center;">13</div>
<div class="t" style="left:352px;top:779.4px;font-size:17.5px;line-height:24px;height:24px;color:#222;font-weight:normal;">【汪一一】三方分账1226</div>
<div class="t" style="left:628px;top:779.4px;font-size:17.5px;line-height:24px;height:24px;color:#222;font-weight:normal;">营业分成</div>
<div class="a" style="left:777px;top:777px;width:47px;height:25px;border-radius:9px;background:#d6efdd"></div>
<div class="t" style="left:777.0px;width:47px;top:778.4px;font-size:14.5px;line-height:24px;height:24px;color:#1f7a45;font-weight:normal;text-align:center;-webkit-text-stroke:0.2px #1f7a45">启用</div>
<div class="t" style="left:1166px;top:779.4px;font-size:17.5px;line-height:24px;height:24px;color:#222;font-weight:normal;">汪一一</div>
<div class="t" style="left:1365px;top:779.4px;font-size:17.5px;line-height:24px;height:24px;color:#222;font-weight:normal;letter-spacing:0">2025-12-26 14:44:42</div>
<div class="t" style="left:1553px;top:779.4px;font-size:17.5px;line-height:24px;height:24px;color:#222;font-weight:normal;">汪一一</div>
<div class="t" style="left:1637px;top:779.4px;font-size:17.5px;line-height:24px;height:24px;color:#4b6ee0;font-weight:normal;">编辑</div>
<div class="t" style="left:1692px;top:779.4px;font-size:17.5px;line-height:24px;height:24px;color:#4b6ee0;font-weight:normal;">停用</div>
<div class="a" style="left:280px;top:851px;width:1571px;height:1px;background:#ebebeb"></div>
<div class="a" style="left:342px;top:811px;width:1px;height:41px;background:#ebebeb"></div>
<div class="a" style="left:1627px;top:811px;width:1px;height:41px;background:#ebebeb"></div>
<div class="t" style="left:286.5px;width:50px;top:820.7px;font-size:17.5px;line-height:24px;height:24px;color:#222;font-weight:normal;text-align:center;">14</div>
<div class="t" style="left:352px;top:820.7px;font-size:17.5px;line-height:24px;height:24px;color:#222;font-weight:normal;">112</div>
<div class="a" style="left:777px;top:818px;width:47px;height:25px;border-radius:9px;background:#d6efdd"></div>
<div class="t" style="left:777.0px;width:47px;top:819.7px;font-size:14.5px;line-height:24px;height:24px;color:#1f7a45;font-weight:normal;text-align:center;-webkit-text-stroke:0.2px #1f7a45">启用</div>
<div class="t" style="left:1365px;top:820.7px;font-size:17.5px;line-height:24px;height:24px;color:#222;font-weight:normal;letter-spacing:0">2025-12-26 14:19:39</div>
<div class="t" style="left:1553px;top:820.7px;font-size:17.5px;line-height:24px;height:24px;color:#222;font-weight:normal;">王老大</div>
<div class="t" style="left:1637px;top:820.7px;font-size:17.5px;line-height:24px;height:24px;color:#4b6ee0;font-weight:normal;">编辑</div>
<div class="t" style="left:1692px;top:820.7px;font-size:17.5px;line-height:24px;height:24px;color:#4b6ee0;font-weight:normal;">停用</div>
<div class="a" style="left:280px;top:892px;width:1571px;height:1px;background:#ebebeb"></div>
<div class="a" style="left:342px;top:852px;width:1px;height:41px;background:#ebebeb"></div>
<div class="a" style="left:1627px;top:852px;width:1px;height:41px;background:#ebebeb"></div>
<div class="t" style="left:286.5px;width:50px;top:862.0px;font-size:17.5px;line-height:24px;height:24px;color:#222;font-weight:normal;text-align:center;">15</div>
<div class="t" style="left:352px;top:862.0px;font-size:17.5px;line-height:24px;height:24px;color:#222;font-weight:normal;">1226款项营业分成</div>
<div class="t" style="left:628px;top:862.0px;font-size:17.5px;line-height:24px;height:24px;color:#222;font-weight:normal;">营业分成</div>
<div class="a" style="left:777px;top:860px;width:47px;height:25px;border-radius:9px;background:#d6efdd"></div>
<div class="t" style="left:777.0px;width:47px;top:861.0px;font-size:14.5px;line-height:24px;height:24px;color:#1f7a45;font-weight:normal;text-align:center;-webkit-text-stroke:0.2px #1f7a45">启用</div>
<div class="t" style="left:890px;top:862.0px;font-size:17.5px;line-height:24px;height:24px;color:#222;font-weight:normal;">11</div>
<div class="t" style="left:1166px;top:862.0px;font-size:17.5px;line-height:24px;height:24px;color:#222;font-weight:normal;">王老大</div>
<div class="t" style="left:1365px;top:862.0px;font-size:17.5px;line-height:24px;height:24px;color:#222;font-weight:normal;letter-spacing:0">2025-12-26 12:17:56</div>
<div class="t" style="left:1553px;top:862.0px;font-size:17.5px;line-height:24px;height:24px;color:#222;font-weight:normal;">王老大</div>
<div class="t" style="left:1637px;top:862.0px;font-size:17.5px;line-height:24px;height:24px;color:#4b6ee0;font-weight:normal;">编辑</div>
<div class="t" style="left:1692px;top:862.0px;font-size:17.5px;line-height:24px;height:24px;color:#4b6ee0;font-weight:normal;">停用</div>
<div class="a" style="left:1865px;top:306px;width:25px;height:601px;background:#fbfbfb"></div>
<div class="a" style="left:1864px;top:232px;width:1px;height:675px;background:#e8e8e8"></div>
<svg class="a" style="left:1871px;top:252px;" width="14" height="12" viewBox="0 0 14 12"><rect x="1" y="1" width="12" height="10" fill="none" stroke="#222" stroke-width="1.6"/><line x1="5" y1="1" x2="5" y2="11" stroke="#222" stroke-width="1.4"/><line x1="9" y1="1" x2="9" y2="11" stroke="#222" stroke-width="1.4"/><line x1="1" y1="2" x2="13" y2="2" stroke="#222" stroke-width="2"/></svg>
<div class="t" style="left:1869px;top:270.0px;font-size:17.5px;line-height:24px;height:24px;color:#222;font-weight:normal;">列</div>
<div class="a" style="left:1866px;top:305px;width:23px;height:1px;background:#e8e8e8"></div>
<svg class="a" style="left:1853px;top:278px;" width="9" height="7" viewBox="0 0 9 7"><path d="M0.5 6.5 L4.5 0.5 L8.5 6.5 Z" fill="#888"/></svg>
<div class="a" style="left:1854px;top:290px;width:7px;height:53px;border-radius:4px;background:#8a8a8a"></div>
<svg class="a" style="left:1853px;top:885px;" width="9" height="7" viewBox="0 0 9 7"><path d="M0.5 0.5 L4.5 6.5 L8.5 0.5 Z" fill="#888"/></svg>
<div class="a" style="left:280px;top:892px;width:1584px;height:15px;background:#fbfbfb"></div>
<div class="a" style="left:342px;top:892px;width:1px;height:15px;background:#e4e4e4"></div>
<div class="a" style="left:1627px;top:892px;width:1px;height:15px;background:#e4e4e4"></div>
<svg class="a" style="left:283px;top:896px;" width="8" height="9" viewBox="0 0 8 9"><path d="M7.5 0.5 L0.5 4.5 L7.5 8.5 Z" fill="#6e6e6e"/></svg>
<svg class="a" style="left:331px;top:896px;" width="8" height="9" viewBox="0 0 8 9"><path d="M0.5 0.5 L7.5 4.5 L0.5 8.5 Z" fill="#6e6e6e"/></svg>
<svg class="a" style="left:346px;top:896px;" width="8" height="9" viewBox="0 0 8 9"><path d="M7.5 0.5 L0.5 4.5 L7.5 8.5 Z" fill="#6e6e6e"/></svg>
<div class="a" style="left:358px;top:897px;width:1015px;height:7px;border-radius:4px;background:#8a8a8a"></div>
<svg class="a" style="left:1612px;top:896px;" width="8" height="9" viewBox="0 0 8 9"><path d="M0.5 0.5 L7.5 4.5 L0.5 8.5 Z" fill="#6e6e6e"/></svg>
<svg class="a" style="left:1631px;top:896px;" width="8" height="9" viewBox="0 0 8 9"><path d="M7.5 0.5 L0.5 4.5 L7.5 8.5 Z" fill="#6e6e6e"/></svg>
<svg class="a" style="left:1853px;top:896px;" width="8" height="9" viewBox="0 0 8 9"><path d="M0.5 0.5 L7.5 4.5 L0.5 8.5 Z" fill="#6e6e6e"/></svg>
<div class="t" style="left:1608px;top:928.0px;font-size:17.5px;line-height:24px;height:24px;color:#222;font-weight:normal;">共166条</div>
<svg class="a" style="left:1692px;top:932px;" width="9" height="15" viewBox="0 0 9 15"><polyline points="7,1 1,7.5 7,14" fill="none" stroke="#bbb" stroke-width="1.4" stroke-linecap="round" stroke-linejoin="round"/></svg>
<div class="a" style="left:1712px;top:924px;width:30px;height:30px;border-radius:8px;background:#4b6fe6"></div>
<div class="t" style="left:1712.0px;width:30px;top:928.0px;font-size:16px;line-height:24px;height:24px;color:#fff;font-weight:bold;text-align:center;">1</div>
<svg class="a" style="left:1752px;top:932px;" width="9" height="15" viewBox="0 0 9 15"><polyline points="1,1 7,7.5 1,14" fill="none" stroke="#999" stroke-width="1.4" stroke-linecap="round" stroke-linejoin="round"/></svg>
<div class="a" style="left:1774px;top:924px;width:116px;height:30px;border:1px solid #d9d9d9;border-radius:9px;background:#fff"></div>
<div class="t" style="left:1782px;top:928.0px;font-size:17.5px;line-height:24px;height:24px;color:#222;font-weight:normal;">200 条/页</div>
<svg class="a" style="left:1865px;top:935px;" width="14" height="9" viewBox="0 0 14 9"><polyline points="1,1 7.0,7 13,1" fill="none" stroke="#444" stroke-width="1.6" stroke-linecap="round" stroke-linejoin="round"/></svg>
<div class="a" style="left:0px;top:0px;width:1920px;height:986px;background:rgba(0,0,0,0.3)"></div>
<div class="a" style="left:535px;top:122px;width:850px;height:718px;border-radius:10px;background:#fff;box-shadow:0 6px 16px rgba(0,0,0,.08),0 3px 6px -4px rgba(0,0,0,.12),0 9px 28px 8px rgba(0,0,0,.05)"></div>
<div class="t" style="left:550px;top:139.0px;font-size:20px;line-height:28px;height:28px;color:#222;font-weight:normal;">创建款项</div>
<svg class="a" style="left:1352px;top:143px;" width="19" height="19" viewBox="0 0 19 19"><path d="M1.5 1.5 L17.5 17.5 M17.5 1.5 L1.5 17.5" stroke="#808080" stroke-width="1.3"/></svg>
<div class="t" style="right:1192.5px;top:189.0px;font-size:17.5px;line-height:24px;height:24px;color:#4d4d4d;font-weight:normal;text-align:right;">款项名称</div>
<svg class="a" style="left:648px;top:194.5px;" width="10" height="11" viewBox="0 0 10 11"><g stroke="#fa4a50" stroke-width="1.3" stroke-linecap="round"><line x1="4.5" y1="1" x2="4.5" y2="10"/><line x1="0.8" y1="3.4" x2="8.2" y2="7.6"/><line x1="0.8" y1="7.6" x2="8.2" y2="3.4"/></g></svg>
<div class="a" style="left:738px;top:182px;width:619px;height:35px;border:1px solid #d9d9d9;border-radius:9px;background:#fff"></div>
<div class="t" style="left:749px;top:189.0px;font-size:17.5px;line-height:24px;height:24px;color:#bdbdbd;font-weight:normal;">请输入款项名称</div>
<div class="t" style="right:574px;top:189.0px;font-size:17.4px;line-height:24px;height:24px;color:#888;font-weight:normal;text-align:right;">0 / 20</div>
<div class="t" style="right:1192.5px;top:233.5px;font-size:17.5px;line-height:24px;height:24px;color:#4d4d4d;font-weight:normal;text-align:right;">款项类型</div>
<svg class="a" style="left:648px;top:239.0px;" width="10" height="11" viewBox="0 0 10 11"><g stroke="#fa4a50" stroke-width="1.3" stroke-linecap="round"><line x1="4.5" y1="1" x2="4.5" y2="10"/><line x1="0.8" y1="3.4" x2="8.2" y2="7.6"/><line x1="0.8" y1="7.6" x2="8.2" y2="3.4"/></g></svg>
<div class="a" style="left:738px;top:227px;width:619px;height:35px;border:1px solid #d9d9d9;border-radius:9px;background:#fff"></div>
<div class="t" style="left:749px;top:233.5px;font-size:17.5px;line-height:24px;height:24px;color:#1a1a1a;font-weight:normal;">营业分成</div>
<svg class="a" style="left:1334px;top:240px;" width="14" height="9" viewBox="0 0 14 9"><polyline points="1,1 7.0,7 13,1" fill="none" stroke="#555" stroke-width="1.5" stroke-linecap="round" stroke-linejoin="round"/></svg>
<div class="t" style="right:1192.5px;top:278.5px;font-size:17.5px;line-height:24px;height:24px;color:#4d4d4d;font-weight:normal;text-align:right;">营业指标</div>
<svg class="a" style="left:648px;top:284.0px;" width="10" height="11" viewBox="0 0 10 11"><g stroke="#fa4a50" stroke-width="1.3" stroke-linecap="round"><line x1="4.5" y1="1" x2="4.5" y2="10"/><line x1="0.8" y1="3.4" x2="8.2" y2="7.6"/><line x1="0.8" y1="7.6" x2="8.2" y2="3.4"/></g></svg>
<div class="a" style="left:738px;top:272px;width:619px;height:35px;border:1px solid #d9d9d9;border-radius:9px;background:#fff"></div>
<div class="t" style="left:749px;top:278.5px;font-size:17.5px;line-height:24px;height:24px;color:#1a1a1a;font-weight:normal;">营业收入</div>
<svg class="a" style="left:1334px;top:285px;" width="14" height="9" viewBox="0 0 14 9"><polyline points="1,1 7.0,7 13,1" fill="none" stroke="#555" stroke-width="1.5" stroke-linecap="round" stroke-linejoin="round"/></svg>
<div class="t" style="left:738px;top:308.5px;font-size:14.7px;line-height:20px;height:20px;color:#8a8a8a;font-weight:normal;letter-spacing:0">营业指标选择订单时，订单数只统计商品订单，不统计卡券订单。</div>
<div class="t" style="left:738px;top:332.5px;font-size:14.7px;line-height:20px;height:20px;color:#8a8a8a;font-weight:normal;letter-spacing:0">订单数包含：未付款、退款等所有订单状态，主要用于三方平台收取费用。</div>
<div class="t" style="right:1192.5px;top:371.0px;font-size:17.5px;line-height:24px;height:24px;color:#4d4d4d;font-weight:normal;text-align:right;">营业分成日期类型</div>
<svg class="a" style="left:578px;top:376.5px;" width="10" height="11" viewBox="0 0 10 11"><g stroke="#fa4a50" stroke-width="1.3" stroke-linecap="round"><line x1="4.5" y1="1" x2="4.5" y2="10"/><line x1="0.8" y1="3.4" x2="8.2" y2="7.6"/><line x1="0.8" y1="7.6" x2="8.2" y2="3.4"/></g></svg>
<svg class="a" style="left:738px;top:372px;" width="20" height="20" viewBox="0 0 20 20"><circle cx="10" cy="10" r="9.3" fill="#fff" stroke="#4a6fe8" stroke-width="1.3"/><circle cx="10" cy="10" r="5.3" fill="#4a6fe8"/></svg>
<div class="t" style="left:763px;top:371.0px;font-size:17.5px;line-height:24px;height:24px;color:#1a1a1a;font-weight:normal;">结账日期</div>
<svg class="a" style="left:848px;top:372px;" width="20" height="20" viewBox="0 0 20 20"><circle cx="10" cy="10" r="9.3" fill="#fff" stroke="#d4d4d4" stroke-width="1.2"/></svg>
<div class="t" style="left:873px;top:371.0px;font-size:17.5px;line-height:24px;height:24px;color:#1a1a1a;font-weight:normal;">营业日期</div>
<div class="t" style="right:1192.5px;top:415.5px;font-size:17.5px;line-height:24px;height:24px;color:#4d4d4d;font-weight:normal;text-align:right;">订单来源</div>
<svg class="a" style="left:648px;top:421.0px;" width="10" height="11" viewBox="0 0 10 11"><g stroke="#fa4a50" stroke-width="1.3" stroke-linecap="round"><line x1="4.5" y1="1" x2="4.5" y2="10"/><line x1="0.8" y1="3.4" x2="8.2" y2="7.6"/><line x1="0.8" y1="7.6" x2="8.2" y2="3.4"/></g></svg>
<div class="a" style="left:738px;top:409px;width:619px;height:35px;border:1px solid #d9d9d9;border-radius:9px;background:#fff"></div>
<div class="t" style="left:749px;top:415.5px;font-size:17.5px;line-height:24px;height:24px;color:#bdbdbd;font-weight:normal;">请选择订单来源</div>
<svg class="a" style="left:1334px;top:422px;" width="14" height="9" viewBox="0 0 14 9"><polyline points="1,1 7.0,7 13,1" fill="none" stroke="#555" stroke-width="1.5" stroke-linecap="round" stroke-linejoin="round"/></svg>
<div class="t" style="right:1215.5px;top:460.5px;font-size:17.5px;line-height:24px;height:24px;color:#4d4d4d;font-weight:normal;text-align:right;">结账方式</div>
<svg class="a" style="left:709px;top:462.5px;" width="19" height="19" viewBox="0 0 19 19"><circle cx="9.5" cy="9.5" r="8" fill="none" stroke="#555" stroke-width="1.4"/><path d="M7 7.5 Q7 5 9.5 5 Q12 5 12 7.3 Q12 8.7 10.4 9.4 Q9.5 9.9 9.5 11.3" fill="none" stroke="#555" stroke-width="1.4"/><circle cx="9.5" cy="13.8" r="0.95" fill="#555"/></svg>
<div class="a" style="left:738px;top:454px;width:619px;height:35px;border:1px solid #d9d9d9;border-radius:9px;background:#fff"></div>
<div class="t" style="left:749px;top:460.5px;font-size:17.5px;line-height:24px;height:24px;color:#bdbdbd;font-weight:normal;">全部</div>
<svg class="a" style="left:1334px;top:467px;" width="14" height="9" viewBox="0 0 14 9"><polyline points="1,1 7.0,7 13,1" fill="none" stroke="#555" stroke-width="1.5" stroke-linecap="round" stroke-linejoin="round"/></svg>
<div class="t" style="right:1215.5px;top:505.5px;font-size:17.5px;line-height:24px;height:24px;color:#4d4d4d;font-weight:normal;text-align:right;">保底金额</div>
<svg class="a" style="left:709px;top:507.5px;" width="19" height="19" viewBox="0 0 19 19"><circle cx="9.5" cy="9.5" r="8" fill="none" stroke="#555" stroke-width="1.4"/><path d="M7 7.5 Q7 5 9.5 5 Q12 5 12 7.3 Q12 8.7 10.4 9.4 Q9.5 9.9 9.5 11.3" fill="none" stroke="#555" stroke-width="1.4"/><circle cx="9.5" cy="13.8" r="0.95" fill="#555"/></svg>
<div class="a" style="left:738px;top:499px;width:619px;height:35px;border:1px solid #d9d9d9;border-radius:9px;background:#fff"></div>
<div class="t" style="left:749px;top:505.5px;font-size:17.5px;line-height:24px;height:24px;color:#bdbdbd;font-weight:normal;">请输入保底金额，最大值100000</div>
<div class="a" style="left:630px;top:548px;width:564px;height:83px;border:1px solid #e8453c;border-radius:5px"></div>
<div class="t" style="right:1192.5px;top:551.0px;font-size:17.5px;line-height:24px;height:24px;color:#4d4d4d;font-weight:normal;text-align:right;">分账类型</div>
<svg class="a" style="left:648px;top:556.5px;" width="10" height="11" viewBox="0 0 10 11"><g stroke="#fa4a50" stroke-width="1.3" stroke-linecap="round"><line x1="4.5" y1="1" x2="4.5" y2="10"/><line x1="0.8" y1="3.4" x2="8.2" y2="7.6"/><line x1="0.8" y1="7.6" x2="8.2" y2="3.4"/></g></svg>
<svg class="a" style="left:738px;top:552px;" width="20" height="20" viewBox="0 0 20 20"><circle cx="10" cy="10" r="9.3" fill="#fff" stroke="#4a6fe8" stroke-width="1.3"/><circle cx="10" cy="10" r="5.3" fill="#4a6fe8"/></svg>
<div class="t" style="left:763px;top:551.0px;font-size:17.5px;line-height:24px;height:24px;color:#1a1a1a;font-weight:normal;">普通分账</div>
<svg class="a" style="left:848px;top:552px;" width="20" height="20" viewBox="0 0 20 20"><circle cx="10" cy="10" r="9.3" fill="#fff" stroke="#d4d4d4" stroke-width="1.2"/></svg>
<div class="t" style="left:873px;top:551.0px;font-size:17.5px;line-height:24px;height:24px;color:#1a1a1a;font-weight:normal;">阶梯分账</div>
<div class="t" style="left:738px;top:581.5px;font-size:14.7px;line-height:20px;height:20px;color:#8a8a8a;font-weight:normal;letter-spacing:0">普通分账：按照每笔订单的金额扣除费率后，再进行累加</div>
<div class="t" style="left:738px;top:605.0px;font-size:14.7px;line-height:20px;height:20px;color:#8a8a8a;font-weight:normal;letter-spacing:0">阶梯分账：按照营业收入累加后，再扣除费率，可设置1-5个阶梯</div>
<div class="t" style="right:1192.5px;top:643.0px;font-size:17.5px;line-height:24px;height:24px;color:#4d4d4d;font-weight:normal;text-align:right;">营业收入</div>
<svg class="a" style="left:647px;top:651px;" width="10" height="11" viewBox="0 0 10 11"><g stroke="#fa4a50" stroke-width="1.3" stroke-linecap="round"><line x1="4.5" y1="1" x2="4.5" y2="10"/><line x1="0.8" y1="3.4" x2="8.2" y2="7.6"/><line x1="0.8" y1="7.6" x2="8.2" y2="3.4"/></g></svg>
<div class="a" style="left:743px;top:637px;width:125px;height:34px;border:1px solid #d9d9d9;border-radius:9px;background:#fff"></div>
<div class="t" style="left:753px;top:643.0px;font-size:17.4px;line-height:24px;height:24px;color:#bdbdbd;font-weight:normal;">0.00</div>
<div class="t" style="left:839px;top:643.0px;font-size:17.5px;line-height:24px;height:24px;color:#444;font-weight:normal;">元</div>
<div class="t" style="left:887px;top:644.0px;font-size:16px;line-height:24px;height:24px;color:#222;font-weight:normal;">~</div>
<div class="a" style="left:917px;top:637px;width:125px;height:34px;border:1px solid #d9d9d9;border-radius:9px;background:#fff"></div>
<div class="t" style="left:927px;top:643.0px;font-size:17px;line-height:24px;height:24px;color:#bdbdbd;font-weight:normal;width:80px;overflow:hidden;letter-spacing:-0.6px">99999999.</div>
<div class="t" style="left:1013px;top:643.0px;font-size:17.5px;line-height:24px;height:24px;color:#444;font-weight:normal;">元</div>
<div class="t" style="left:1060px;top:643.0px;font-size:17.5px;line-height:24px;height:24px;color:#1a1a1a;font-weight:normal;">, 费率为</div>
<div class="a" style="left:1141px;top:637px;width:125px;height:34px;border:1px solid #d9d9d9;border-radius:9px;background:#fff"></div>
<div class="t" style="left:1240px;top:643.0px;font-size:17.4px;line-height:24px;height:24px;color:#555;font-weight:normal;">%</div>
<div class="t" style="right:1192.5px;top:688.0px;font-size:17.5px;line-height:24px;height:24px;color:#4d4d4d;font-weight:normal;text-align:right;">款项说明</div>
<svg class="a" style="left:648px;top:693.5px;" width="10" height="11" viewBox="0 0 10 11"><g stroke="#fa4a50" stroke-width="1.3" stroke-linecap="round"><line x1="4.5" y1="1" x2="4.5" y2="10"/><line x1="0.8" y1="3.4" x2="8.2" y2="7.6"/><line x1="0.8" y1="7.6" x2="8.2" y2="3.4"/></g></svg>
<div class="a" style="left:738px;top:681px;width:619px;height:94px;overflow:hidden"><div class="a" style="left:0;top:0;width:619px;height:130px;border:1px solid #d9d9d9;border-radius:9px;background:#fff"></div></div>
<div class="t" style="left:749px;top:686.0px;font-size:17.5px;line-height:28px;height:28px;color:#bdbdbd;font-weight:normal;">请输入款项说明。分账款项必须合法合规，否则可能触发风险管控导致无法分</div>
<div class="t" style="left:749px;top:714.0px;font-size:17.5px;line-height:28px;height:28px;color:#bdbdbd;font-weight:normal;">账。</div>
<div class="a" style="left:1357px;top:182px;width:13px;height:593px;background:#fafafa"></div>
<svg class="a" style="left:1359px;top:185.5px;" width="9" height="7" viewBox="0 0 9 7"><path d="M0.5 6.5 L4.5 0.5 L8.5 6.5 Z" fill="#8c8c8c"/></svg>
<div class="a" style="left:1360px;top:197px;width:7px;height:525px;border-radius:4px;background:#8a8a8a"></div>
<svg class="a" style="left:1359px;top:765px;" width="9" height="7" viewBox="0 0 9 7"><path d="M0.5 0.5 L4.5 6.5 L8.5 0.5 Z" fill="#8c8c8c"/></svg>
<div class="a" style="left:1221px;top:790px;width:70px;height:35px;border:1px solid #d4d4d4;border-radius:9px;background:#fff"></div>
<div class="t" style="left:1221.0px;width:70px;top:796.5px;font-size:17.5px;line-height:24px;height:24px;color:#222;font-weight:400;text-align:center;-webkit-text-stroke:0.35px #222">取 消</div>
<div class="a" style="left:1301px;top:790px;width:69px;height:35px;border-radius:9px;background:#4b70e8"></div>
<div class="t" style="left:1301.0px;width:69px;top:796.5px;font-size:17.5px;line-height:24px;height:24px;color:#fff;font-weight:400;text-align:center;-webkit-text-stroke:0.35px #fff">保 存</div>
</body></html>
